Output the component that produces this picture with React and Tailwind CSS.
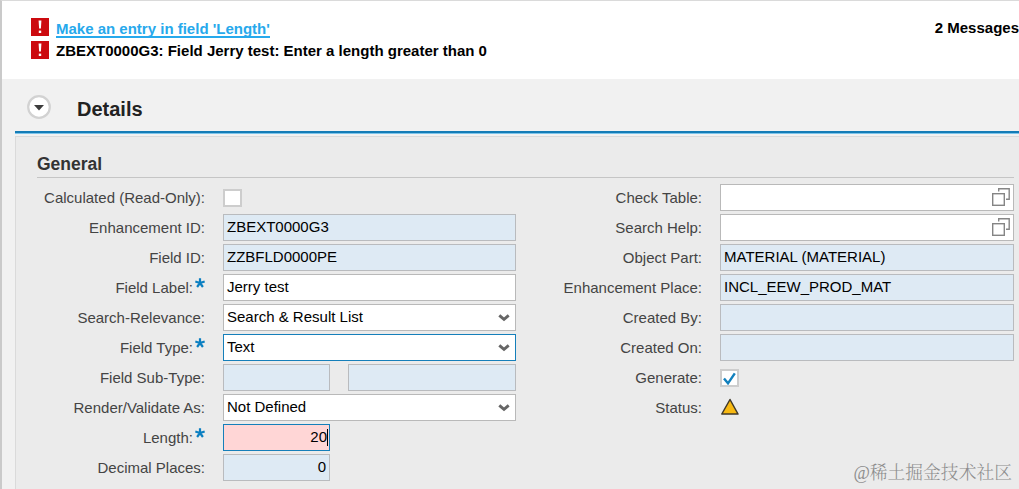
const FONT = "font-['Liberation_Sans',Arial,sans-serif]";

function ErrorIcon() {
  return (
    <svg width="18" height="18" viewBox="0 0 18 18" className="block shrink-0">
      <rect width="18" height="18" fill="#cc0a0f" />
      <path d="M7.6 2.4h2.8l-.5 8.2H8.1z" fill="#fff" />
      <rect x="7.8" y="12.6" width="2.4" height="2.4" fill="#fff" />
    </svg>
  );
}

function Chevron() {
  return (
    <svg width="12" height="8" viewBox="0 0 12 8" className="block shrink-0">
      <path d="M1.3 1.3 6 5.4l4.7-4.1" fill="none" stroke="#666" strokeWidth="2.9" />
    </svg>
  );
}

function ValueHelp() {
  return (
    <svg width="18" height="18" viewBox="0 0 18 18" className="mr-[-1px] mb-px block shrink-0">
      <path d="M6.7 3.6V.7h10.5v10.5h-3.2" fill="none" stroke="#858585" strokeWidth="1.4" />
      <rect x=".7" y="5.7" width="11.6" height="11.6" fill="#fff" stroke="#858585" strokeWidth="1.4" />
    </svg>
  );
}

function Asterisk() {
  return (
    <svg width="10" height="10" viewBox="0 0 10 10" className="mt-[4px] ml-[2px] block shrink-0 self-start">
      <path d="M5 5V.2M5 5 .3 3.5M5 5l4.7-1.5M5 5 2.1 9M5 5l2.9 4" fill="none" stroke="#0b7fc1" strokeWidth="2.2" />
    </svg>
  );
}

function Row({ label, required, children }) {
  return (
    <div className="flex h-[27px] items-center">
      <div className="flex h-[27px] flex-1 justify-end text-[#444] leading-[28px]">
        <span>{label}:</span>
        {required && <Asterisk />}
      </div>
      <div className="ml-[18px] flex w-[293px] items-center">{children}</div>
    </div>
  );
}

function Field({ value, tone = "readonly", width = "w-full", right, children }) {
  const tones = {
    readonly: "border-[#b9bbbe] bg-[#deeaf4]",
    edit: "border-[#b9b9b9] bg-white",
    focus: "border-[#157fba] bg-white",
    error: "border-[#157fba] bg-[#ffd6d6]",
  };
  return (
    <div className={`flex h-[27px] items-center border ${right ? "pr-[3px]" : "pr-[4px]"} pl-[3px] leading-[24px] text-black ${tones[tone]} ${width}`}>
      <span className={`mb-px flex-1 ${right ? "text-right" : ""}`}>{value}</span>
      {children}
    </div>
  );
}

function Select({ value, tone = "edit" }) {
  return (
    <Field value={value} tone={tone}>
      <span className="mr-px">
        <Chevron />
      </span>
    </Field>
  );
}

function CheckBox({ checked }) {
  return (
    <div className="mt-px flex h-[18px] w-[19px] items-center justify-center border-2 border-[#cdcdcd] bg-white">
      {checked && (
        <svg width="13" height="13" viewBox="0 0 13 13" className="block">
          <path d="M1 6.5 5 11.3 11.8 1.3" fill="none" stroke="#1280bd" strokeWidth="2.4" />
        </svg>
      )}
    </div>
  );
}

export default function App() {
  return (
    <div className={`relative flex h-[489px] w-[1019px] flex-col overflow-hidden border-t border-l-2 border-t-[#dadada] border-l-[#cacaca] bg-[#f1f1f1] text-[15px] ${FONT}`}>
      <div className="flex h-[78px] shrink-0 justify-between bg-white pt-[17px] pl-[29px] font-bold">
        <div className="flex flex-col gap-[5px]">
          <div className="flex h-[18px] items-center gap-[7px]">
            <ErrorIcon />
            <a className="mt-[4px] h-[18px] border-b-2 border-[#27a9ec] leading-[18px] text-[#27a9ec]">Make an entry in field 'Length'</a>
          </div>
          <div className="flex h-[18px] items-center gap-[7px]">
            <ErrorIcon />
            <span className="mt-px leading-[18px] text-black">ZBEXT0000G3: Field Jerry test: Enter a length greater than 0</span>
          </div>
        </div>
        <div className="pt-px leading-[18px] text-black">2 Messages</div>
      </div>

      <div className="flex flex-1 flex-col pl-[13px]">
        <div className="flex h-[52px] shrink-0 items-center pl-[12px]">
          <svg width="24" height="24" viewBox="0 0 24 24" className="mb-[-4px] block">
            <circle cx="12" cy="12" r="10.8" fill="#fff" stroke="#d2d2d2" strokeWidth="2.2" />
            <path d="M7 10h10l-5 5.4z" fill="#3c3c3c" />
          </svg>
          <h2 className="mt-[7px] ml-[26px] text-[20px] leading-[24px] font-bold text-[#222]">Details</h2>
        </div>
        <div className="h-[3px] shrink-0 border-b border-b-[#7cc4ea] bg-[#147cb6]" />
        <div className="h-[2px] shrink-0 bg-[#f1f1f1]" />
        <div className="flex-1 border-t border-l border-[#dadada] bg-[#ebebeb] pt-[15px] pl-[21px]">
          <h3 className="mr-[5px] h-[26px] border-b border-[#c5c5c5] text-[17.5px] leading-[24px] font-bold text-[#333]">General</h3>
          <div className="mt-[6px] flex">
            <div className="flex w-[479px] flex-col gap-[3px]">
              <Row label="Calculated (Read-Only)"><CheckBox /></Row>
              <Row label="Enhancement ID"><Field value="ZBEXT0000G3" /></Row>
              <Row label="Field ID"><Field value="ZZBFLD0000PE" /></Row>
              <Row label="Field Label" required><Field value="Jerry test" tone="edit" /></Row>
              <Row label="Search-Relevance"><Select value="Search & Result List" /></Row>
              <Row label="Field Type" required><Select value="Text" tone="focus" /></Row>
              <Row label="Field Sub-Type">
                <Field width="w-[107px]" />
                <div className="w-[18px]" />
                <Field width="w-[168px]" />
              </Row>
              <Row label="Render/Validate As"><Select value="Not Defined" /></Row>
              <Row label="Length" required>
                <Field value="20" tone="error" width="w-[107px]" right>
                  <span className="mr-[-2px] h-[17px] w-px bg-black" />
                </Field>
              </Row>
              <Row label="Decimal Places"><Field value="0" width="w-[107px]" right /></Row>
            </div>
            <div className="ml-[17px] flex w-[480px] flex-col gap-[3px]">
              <Row label="Check Table"><Field tone="edit" width="w-[294px] shrink-0"><ValueHelp /></Field></Row>
              <Row label="Search Help"><Field tone="edit" width="w-[294px] shrink-0"><ValueHelp /></Field></Row>
              <Row label="Object Part"><Field value="MATERIAL (MATERIAL)" width="w-[294px] shrink-0" /></Row>
              <Row label="Enhancement Place"><Field value="INCL_EEW_PROD_MAT" width="w-[294px] shrink-0" /></Row>
              <Row label="Created By"><Field width="w-[294px] shrink-0" /></Row>
              <Row label="Created On"><Field width="w-[294px] shrink-0" /></Row>
              <Row label="Generate"><CheckBox checked /></Row>
              <Row label="Status">
                <svg width="20" height="18" viewBox="0 0 20 18" className="mb-px block">
                  <path d="M10 1.5 18 16H1.8z" fill="#f8b912" stroke="#40392a" strokeWidth="1.5" strokeLinejoin="round" />
                </svg>
              </Row>
            </div>
          </div>
        </div>
      </div>
      <div className="absolute right-[7px] bottom-[3px] font-['Liberation_Serif','Noto_Serif_CJK_SC','Noto_Sans_CJK_SC',serif] text-[17.8px] leading-[26px] font-light whitespace-nowrap text-[#8d8d8d]">@稀土掘金技术社区</div>
    </div>
  );
}
